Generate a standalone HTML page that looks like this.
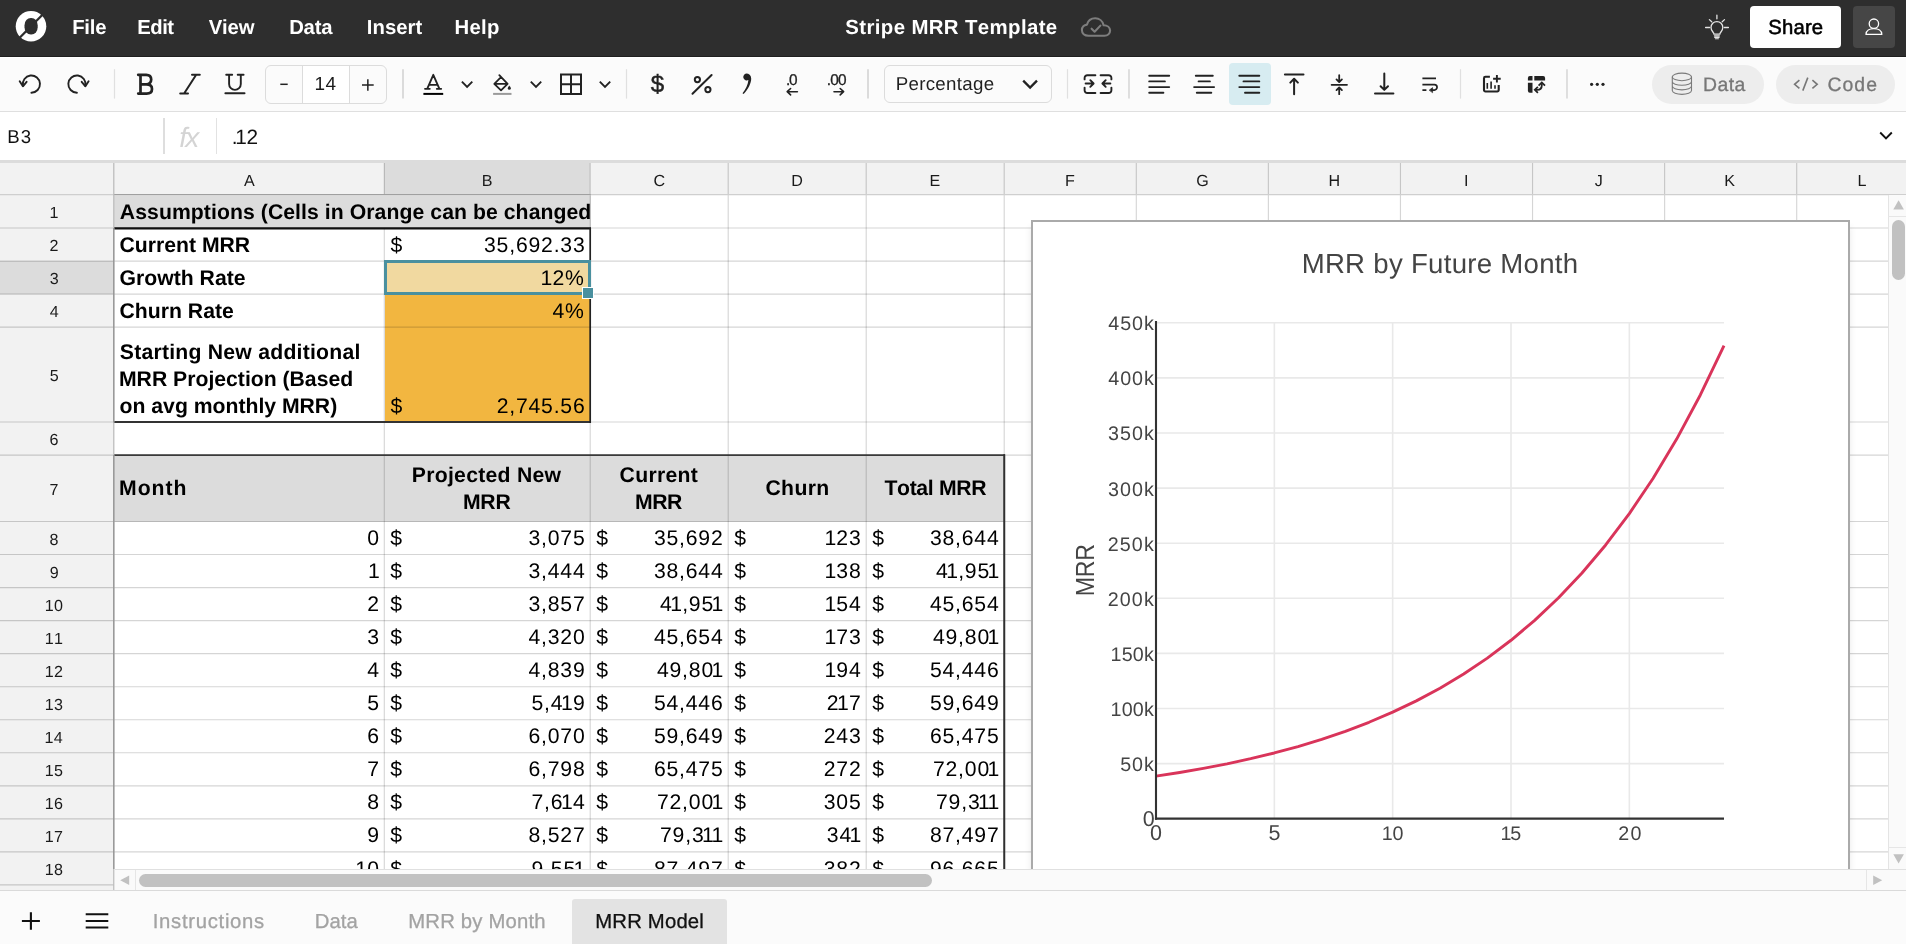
<!DOCTYPE html>
<html lang="en"><head><meta charset="utf-8"><title>Stripe MRR Template</title>
<style>
html,body{margin:0;padding:0;}
body{width:1906px;height:944px;overflow:hidden;position:relative;background:#fff;font-family:"Liberation Sans",sans-serif;font-kerning:none;text-rendering:geometricPrecision;-webkit-font-smoothing:antialiased;}
.t{position:absolute;white-space:pre;line-height:1;display:block;}
.b{position:absolute;box-sizing:border-box;}
svg{position:absolute;overflow:visible;}
.n1{margin:0 -0.7px 0 -2.4px;}
</style></head><body>
<div id="app" style="position:absolute;left:0;top:0;width:1906px;height:944px;will-change:transform;">
<div id="topbar">
<div class="b" style="left:0px;top:0px;width:1906px;height:56px;background:#2e2e2e;"></div>
<div class="b" style="left:0px;top:56px;width:1906px;height:1px;background:#1f1f1f;"></div>
<svg style="left:15px;top:10px" width="33" height="33" viewBox="0 0 33 33"><circle cx="16.0" cy="16.2" r="15.3" fill="#fff"/><rect x="9.5" y="8.0" width="13.2" height="16.5" rx="6.3" ry="7.2" fill="#2e2e2e"/><path d="M4.4 28.0 L29.2 3.0" stroke="#2e2e2e" stroke-width="2.3" fill="none"/></svg>
<span class="t" style="left:72.14px;top:18px;font-size:20.3px;letter-spacing:-0.173px;font-weight:700;color:#fff;">File</span>
<span class="t" style="left:137.34px;top:18px;font-size:20.3px;letter-spacing:-0.511px;font-weight:700;color:#fff;">Edit</span>
<span class="t" style="left:208.76px;top:18px;font-size:20.3px;letter-spacing:-0.187px;font-weight:700;color:#fff;">View</span>
<span class="t" style="left:289.14px;top:18px;font-size:20.3px;letter-spacing:-0.190px;font-weight:700;color:#fff;">Data</span>
<span class="t" style="left:366.84px;top:18px;font-size:20.3px;letter-spacing:0.025px;font-weight:700;color:#fff;">Insert</span>
<span class="t" style="left:454.44px;top:18px;font-size:20.3px;letter-spacing:0.334px;font-weight:700;color:#fff;">Help</span>
<span class="t" style="left:845.31px;top:18px;font-size:20.4px;letter-spacing:0.379px;font-weight:700;color:#fff;">Stripe MRR Template</span>
<svg style="left:1079px;top:14px" width="34" height="26" viewBox="0 0 34 26" fill="none" stroke="#7d7d7d" stroke-width="2.1" stroke-linecap="round" stroke-linejoin="round"><path d="M9.5 21.8 C5.5 21.8 2.9 19.3 2.9 16.1 C2.9 13.1 5.1 10.9 8.0 10.6 C9.0 6.8 12.3 4.3 16.2 4.3 C20.3 4.3 23.8 7.2 24.6 11.2 C28.3 11.2 31.1 13.5 31.1 16.6 C31.1 19.6 28.7 21.8 25.5 21.8 Z"/><path d="M12.6 14.7 L15.6 17.7 L21.4 11.6"/></svg>
<svg style="left:1700px;top:10px" width="34" height="34" viewBox="0 0 34 34" fill="none" stroke="#e4e4e4" stroke-width="1.3" stroke-linecap="round"><path d="M16.9 5.2V8.8M5.6 17.5H9.6M24.3 17.5H28.4M9.4 9.6L11.7 11.8M24.5 9.6L22.2 11.8"/><path d="M14.0 24.2 C14.0 22.4 11.0 21.0 11.0 17.4 C11.0 14.1 13.6 11.6 16.9 11.6 C20.2 11.6 22.8 14.1 22.8 17.4 C22.8 21.0 19.8 22.4 19.8 24.2 Z"/><path d="M14.4 25.9H19.4M14.7 27.4H19.1M15.4 28.8H18.4" stroke-width="1.1"/></svg>
<div class="b" style="left:1750px;top:6px;width:91px;height:42px;background:#fff;border-radius:4px;"></div>
<span class="t" style="left:1768.18px;top:18px;font-size:20.3px;letter-spacing:0.214px;-webkit-text-stroke:0.55px #000;">Share</span>
<div class="b" style="left:1853px;top:6px;width:42px;height:42px;background:#464646;border-radius:4px;"></div>
<svg style="left:1853px;top:6px" width="42" height="42" viewBox="0 0 42 42" fill="none" stroke="#fff" stroke-width="1.3"><circle cx="20.9" cy="17.7" r="4.7"/><path d="M13.0 28.4 C13.0 24.6 16.6 22.6 20.9 22.6 C25.2 22.6 28.8 24.6 28.8 28.4 Z" stroke-linejoin="round"/></svg>
</div>
<div id="toolbar">
<div class="b" style="left:0px;top:58px;width:1906px;height:53px;background:#fbfbfb;"></div>
<div class="b" style="left:0px;top:111px;width:1906px;height:1px;background:#dfdfdf;"></div>
<div class="b" style="left:1229px;top:63px;width:42px;height:41.5px;background:#d7ecf1;border-radius:4px;"></div>
<div class="b" style="left:265px;top:65px;width:122px;height:38.5px;border:1px solid #dcdcdc;border-radius:6px;background:#fbfbfb;"></div>
<div class="b" style="left:302px;top:66px;width:48px;height:36.5px;background:#fff;border-left:1px solid #dcdcdc;border-right:1px solid #dcdcdc;"></div>
<span class="t" style="left:314.45px;top:75px;font-size:19.0px;letter-spacing:0.570px;color:#1a1a1a;">14</span>
<div class="b" style="left:884px;top:65px;width:168px;height:37.5px;border:1px solid #dcdcdc;border-radius:6px;background:#fbfbfb;"></div>
<span class="t" style="left:895.67px;top:75px;font-size:18.7px;letter-spacing:0.313px;color:#1f1f1f;">Percentage</span>
<div class="b" style="left:1652px;top:64.5px;width:112px;height:39.5px;background:#ededed;border-radius:20px;"></div>
<div class="b" style="left:1776px;top:64.5px;width:119px;height:39.5px;background:#ededed;border-radius:20px;"></div>
<span class="t" style="left:1703.11px;top:76px;font-size:19.4px;letter-spacing:0.371px;color:#777;-webkit-text-stroke:0.3px #777;">Data</span>
<span class="t" style="left:1827.51px;top:76px;font-size:19.4px;letter-spacing:1.023px;color:#777;-webkit-text-stroke:0.3px #777;">Code</span>
<span class="t" style="left:785.89px;top:73px;font-size:15.4px;letter-spacing:-1.136px;color:#222;-webkit-text-stroke:0.3px #222;">.0</span>
<span class="t" style="left:826.79px;top:73px;font-size:15.4px;letter-spacing:-0.800px;color:#222;-webkit-text-stroke:0.3px #222;">.00</span>
<svg style="left:0;top:56px" width="1906" height="56" viewBox="0 56 1906 56" fill="none" stroke="#222" stroke-linecap="round" stroke-linejoin="round"><path d="M114.5 69.2V98.6" stroke="#e0e0e0" stroke-width="1.2" stroke-linecap="butt"/><path d="M403 69.2V98.6" stroke="#d4d4d4" stroke-width="1.6" stroke-linecap="butt"/><path d="M626.5 69.2V98.6" stroke="#e0e0e0" stroke-width="1.2" stroke-linecap="butt"/><path d="M868 69.2V98.6" stroke="#d4d4d4" stroke-width="1.6" stroke-linecap="butt"/><path d="M1067.5 69.2V98.6" stroke="#e0e0e0" stroke-width="1.2" stroke-linecap="butt"/><path d="M1129 69.2V98.6" stroke="#d8d8d8" stroke-width="1.6" stroke-linecap="butt"/><path d="M1460.5 69.2V98.6" stroke="#e0e0e0" stroke-width="1.2" stroke-linecap="butt"/><path d="M1567 69.2V98.6" stroke="#d8d8d8" stroke-width="1.6" stroke-linecap="butt"/><g stroke-width="1.9"><path d="M22.9 85.6A8.6 8.6 0 1 1 31.4 92.7"/><path d="M19.7 81.3L22.9 86.3L26.6 81.8"/><path d="M85.4 85.6A8.6 8.6 0 1 0 76.9 92.7"/><path d="M88.6 81.3L85.4 86.3L81.7 81.8"/></g><path d="M138.2 74.8H146.2C150 74.8 151.2 77.3 151.2 79.6C151.2 82 149.6 84.4 146.2 84.4H140.5M146.4 84.4C150.6 84.4 152 86.8 152 89C152 91.3 150.6 93.6 146.6 93.6H138.2M140.5 74.8V93.6" stroke-width="2.7"/><path d="M192 74.8H199.8M180.2 93.5H188M196.2 74.8L184.1 93.5" stroke-width="2.0"/><path d="M229.1 74.8V84.0A5.85 5.85 0 0 0 240.8 84.0V74.8M226.2 74.8H232.2M237.7 74.8H243.6" stroke-width="1.9"/><path d="M225.4 93.3H244.5" stroke-width="2.0"/><path d="M280.3 84.3H287.7" stroke-width="1.5" stroke-linecap="butt"/><path d="M362 85H373.7M367.85 79.2V90.8" stroke-width="1.5" stroke-linecap="butt"/><path d="M427.3 88.7L433.3 74.8L439.3 88.7M429.2 84.9H437.4M425 88.8H429.8M436.8 88.8H441.2" stroke-width="1.85"/><path d="M423.4 93.9H443.2" stroke="#000" stroke-width="2" stroke-linecap="butt"/><path d="M461.90000000000003 81.6L467.1 86.8L472.3 81.6" stroke-width="1.9" stroke-linecap="butt" stroke-linejoin="miter"/><path d="M530.8 81.6L536.0 86.8L541.2 81.6" stroke-width="1.9" stroke-linecap="butt" stroke-linejoin="miter"/><path d="M599.8 81.6L605.0 86.8L610.2 81.6" stroke-width="1.9" stroke-linecap="butt" stroke-linejoin="miter"/><path d="M499.3 75.2L507.6 83.8L501 90.4L494.3 83.8L501 77.1M494.6 83.9H507.2" stroke-width="1.8"/><path d="M509.3 85.6C510.3 86.9 510.8 87.7 510.8 88.3A1.5 1.5 0 0 1 507.8 88.3C507.8 87.7 508.3 86.9 509.3 85.6Z" fill="#222" stroke="none"/><path d="M493.1 93.9H511.5" stroke="#9a9a9a" stroke-width="2" stroke-linecap="butt"/><path d="M561 74.4H581V93.9H561ZM571 74.4V93.9M561 84.15H581" stroke-width="2" stroke-linejoin="miter" stroke-linecap="butt"/><g stroke-width="2.0"><circle cx="697.4" cy="79.6" r="2.6"/><circle cx="707.9" cy="89.6" r="2.6"/><path d="M711.6 75L692.5 93.8"/></g><path d="M746.3 73.6A3.4 3.4 0 1 0 748.4 79.9C748.0 84.6 745.6 89.6 742.5 93.2L743.6 94.1C748.2 89.4 751.4 83.0 751.2 78.6C751.1 75.3 748.9 73.6 746.3 73.6Z" fill="#222" stroke="none"/><g stroke-width="1.6"><path d="M797.4 91.7H787.4M790.6 88.5L787.2 91.7L790.6 94.9"/><path d="M834 91.7H843.4M840.2 88.5L843.6 91.7L840.2 94.9"/></g><path d="M1023.2 80.6L1030.1 87.6L1037 80.6" stroke-width="2.3" stroke-linecap="butt" stroke-linejoin="miter"/><g stroke-width="1.9"><path d="M1095.4 75.2H1087.3A2.7 2.7 0 0 0 1084.6 77.9V79.4M1084.6 87.6V90.3A2.7 2.7 0 0 0 1087.3 93H1095.4M1100.6 75.2H1108.7A2.7 2.7 0 0 1 1111.4 77.9V79.4M1111.4 87.6V90.3A2.7 2.7 0 0 1 1108.7 93H1100.6"/><path d="M1085.6 83.5H1093.4M1090.3 80.2L1093.6 83.5L1090.3 86.8M1110.4 83.5H1102.6M1105.7 80.2L1102.4 83.5L1105.7 86.8"/></g><g stroke-width="1.9"><path d="M1149.2 75.8H1169.2M1149.2 81.4H1164.9M1149.2 87.1H1169.2M1149.2 92.7H1163.4"/><path d="M1195.8 75.8H1212.8M1198.6 81.4H1209.9M1194.1 87.1H1214.1M1196.8 92.7H1211.3"/><path d="M1239.3 75.8H1259.3M1243.5 81.4H1259.3M1239.3 87.1H1259.3M1245 92.7H1259.3"/></g><g stroke-width="2.0"><path d="M1284.9 74.4H1303.5M1294.1 79V94.2M1290.3 82.6L1294.1 78.8L1297.9 82.6"/><path d="M1331.6 84.8H1347M1339.2 75.2V81.6M1336.5 79.4L1339.2 82.1L1341.9 79.4M1339.2 94.2V87.9M1336.5 90.1L1339.2 87.4L1341.9 90.1" stroke-width="1.8"/><path d="M1375 93.4H1393.4M1384.3 73.6V89.6M1380.6 86.2L1384.3 89.9L1388 86.2"/></g><g stroke-width="1.75"><path d="M1422.4 78.3H1436M1422.4 84.7H1434.4A2.65 2.65 0 0 1 1434.4 90H1431.6M1422.4 90H1426.4" stroke-linecap="butt"/><path d="M1429.4 90L1432.6 87.6V92.4Z" fill="#222" stroke-width="0.6"/></g><g stroke-width="2.1"><path d="M1489.9 76.8H1485.4A1.4 1.4 0 0 0 1484 78.2V90.1A1.4 1.4 0 0 0 1485.4 91.5H1497.3A1.4 1.4 0 0 0 1498.7 90.1V85.1" stroke-linecap="butt"/><path d="M1493.1 78.7H1500.7M1496.9 75.1V82.5" stroke-width="1.9" stroke-linecap="butt"/><path d="M1487.3 83.1V88.7M1491.1 81.4V88.7M1495 85.2V88.7" stroke-width="1.6" stroke-linecap="butt"/></g><g fill="#222" stroke="none"><path d="M1529.9 76H1532.5V80.4H1527.9V78A2 2 0 0 1 1529.9 76Z"/><path d="M1534.3 76H1543.1A2 2 0 0 1 1545.1 78V80.4H1534.3Z"/><path d="M1527.9 82.8H1532.5V92.7H1529.9A2 2 0 0 1 1527.9 90.7Z"/></g><g stroke-width="1.8" stroke-linecap="butt" stroke-linejoin="miter"><path d="M1535.2 89.8H1537.2C1540.2 89.8 1541.8 88 1541.8 85.2V83.4"/><path d="M1537.9 86.9L1534.8 89.8L1537.9 92.8M1538.6 85.6L1541.8 82.4L1545 85.6"/></g><circle cx="1591.6" cy="84.3" r="1.6" fill="#222" stroke="none"/><circle cx="1597.3" cy="84.3" r="1.6" fill="#222" stroke="none"/><circle cx="1603.0" cy="84.3" r="1.6" fill="#222" stroke="none"/><g stroke="#7a7a7a" stroke-width="1.1"><ellipse cx="1681.9" cy="76.9" rx="9.6" ry="3.8"/><path d="M1672.3 76.9V90.6C1672.3 92.7 1676.6 94.4 1681.9 94.4C1687.2 94.4 1691.5 92.7 1691.5 90.6V76.9M1672.3 81.5C1672.3 83.6 1676.6 85.3 1681.9 85.3C1687.2 85.3 1691.5 83.6 1691.5 81.5M1672.3 86.1C1672.3 88.2 1676.6 89.9 1681.9 89.9C1687.2 89.9 1691.5 88.2 1691.5 86.1"/></g><g stroke="#777" stroke-width="1.6" stroke-linecap="butt" stroke-linejoin="miter"><path d="M1799.4 80.2L1794.6 84.3L1799.4 88.4M1812.4 80.2L1817.2 84.3L1812.4 88.4M1807.8 77.6L1802.8 90.6"/></g></svg>
<span class="t" style="left:650.74px;top:73px;font-size:24.2px;color:#222;-webkit-text-stroke:0.45px #222;">$</span>
</div>
<div id="formulabar">
<div class="b" style="left:0px;top:112px;width:1906px;height:48px;background:#fff;"></div>
<span class="t" style="left:7.17px;top:128px;font-size:18.6px;letter-spacing:1.093px;color:#111;">B3</span>
<div class="b" style="left:163px;top:118px;width:2px;height:36px;background:#dedede;"></div>
<div class="b" style="left:216px;top:118px;width:1px;height:36px;background:#e2e2e2;"></div>
<span class="t" style="left:179.36px;top:124px;font-size:28.0px;letter-spacing:-1.956px;font-style:italic;color:#d4d4d4;">fx</span>
<span class="t" style="left:231.70px;top:128px;font-size:20.8px;letter-spacing:0.200px;color:#111;">.<span class="n1">1</span>2</span>
<svg style="left:1874px;top:128px" width="24" height="16" viewBox="1874 128 24 16" fill="none" stroke="#111" stroke-width="1.9"><path d="M1880.2 132.5L1886 138.3L1891.8 132.5"/></svg>
</div>
<div id="grid" style="position:absolute;left:0;top:160px;width:1906px;height:709px;overflow:hidden;">
<div style="position:absolute;left:0;top:-160px;width:1906px;height:944px;">
<div class="b" style="left:0px;top:160px;width:1906px;height:709px;background:#fff;"></div>
<div class="b" style="left:114px;top:195px;width:476.5px;height:33.2px;background:#dcdcdc;"></div>
<div class="b" style="left:114px;top:455px;width:890.3px;height:67px;background:#dcdcdc;"></div>
<div class="b" style="left:384.5px;top:294px;width:206px;height:128px;background:#f2b640;"></div>
<div class="b" style="left:384.5px;top:261px;width:206px;height:33.5px;background:#f1d9a0;"></div>
<svg style="left:0;top:0" width="1906" height="944" viewBox="0 0 1906 944" fill="none"><g stroke="#000" stroke-opacity="0.165" stroke-width="1.15"><path d="M114 228.00H1888"/><path d="M114 261.05H1888"/><path d="M114 294.10H1888"/><path d="M114 327.15H1888"/><path d="M114 422.00H1888"/><path d="M114 455.10H1888"/><path d="M114 521.50H1888"/><path d="M114 554.54H1888"/><path d="M114 587.58H1888"/><path d="M114 620.62H1888"/><path d="M114 653.66H1888"/><path d="M114 686.70H1888"/><path d="M114 719.74H1888"/><path d="M114 752.78H1888"/><path d="M114 785.82H1888"/><path d="M114 818.86H1888"/><path d="M114 851.90H1888"/><path d="M384.30 228.5V869"/><path d="M590.20 195V869"/><path d="M728.20 195V869"/><path d="M866.20 195V869"/><path d="M1004.20 195V869"/><path d="M1136.30 195V869"/><path d="M1268.38 195V869"/><path d="M1400.46 195V869"/><path d="M1532.54 195V869"/><path d="M1664.62 195V869"/><path d="M1796.70 195V869"/></g><g stroke="#222" stroke-linecap="butt"><path d="M114 228.4H591" stroke-width="2.1" stroke="#111"/><path d="M114 422.0H591" stroke-width="2.0" stroke="#333"/><path d="M590.2 228V423" stroke-width="1.7" stroke="#222"/><path d="M114 455.2H1005" stroke-width="1.8" stroke="#3a3a3a"/><path d="M1004.25 454.3V869" stroke-width="2.0" stroke="#303030"/></g></svg>
<div class="b" style="left:383.6px;top:260.2px;width:207.2px;height:35.2px;border:3px solid #4a909f;"></div>
<div class="b" style="left:582px;top:286.8px;width:12.4px;height:12.4px;background:#4a909f;border:1.2px solid #fff;"></div>
<div style="position:absolute;left:114px;top:195px;width:476.5px;height:33px;overflow:hidden;"><div style="position:absolute;left:-114px;top:-195px;"><span class="t" style="left:119.87px;top:202px;font-size:21.2px;letter-spacing:0.068px;font-weight:700;">Assumptions (Cells in Orange can be changed)</span></div></div>
<span class="t" style="left:119.53px;top:235px;font-size:21.2px;letter-spacing:-0.003px;font-weight:700;">Current MRR</span>
<span class="t" style="left:119.53px;top:268px;font-size:21.2px;letter-spacing:0.006px;font-weight:700;">Growth Rate</span>
<span class="t" style="left:119.53px;top:301px;font-size:21.2px;letter-spacing:0.016px;font-weight:700;">Churn Rate</span>
<span class="t" style="left:119.79px;top:342px;font-size:21.2px;letter-spacing:0.234px;font-weight:700;">Starting New additional</span>
<span class="t" style="left:118.98px;top:369px;font-size:21.2px;letter-spacing:-0.005px;font-weight:700;">MRR Projection (Based</span>
<span class="t" style="left:119.57px;top:396px;font-size:21.2px;letter-spacing:-0.005px;font-weight:700;">on avg monthly MRR)</span>
<span class="t" style="left:390.47px;top:235px;font-size:21.2px;">$</span>
<span class="t" style="right:1320.50px;top:235px;font-size:21.2px;letter-spacing:0.8px;">35,692.33</span>
<span class="t" style="right:1321.40px;top:268px;font-size:21.2px;letter-spacing:0.8px;"><span class="n1">1</span>2%</span>
<span class="t" style="right:1321.40px;top:301px;font-size:21.2px;letter-spacing:0.8px;">4%</span>
<span class="t" style="left:390.47px;top:396px;font-size:21.2px;">$</span>
<span class="t" style="right:1320.50px;top:396px;font-size:21.2px;letter-spacing:0.8px;">2,745.56</span>
<span class="t" style="left:119.08px;top:478px;font-size:21.2px;letter-spacing:0.941px;font-weight:700;">Month</span>
<span class="t" style="left:411.78px;top:465px;font-size:21.2px;letter-spacing:0.274px;font-weight:700;">Projected New</span>
<span class="t" style="left:462.98px;top:492px;font-size:21.2px;letter-spacing:-0.263px;font-weight:700;">MRR</span>
<span class="t" style="left:619.53px;top:465px;font-size:21.2px;letter-spacing:0.311px;font-weight:700;">Current</span>
<span class="t" style="left:634.88px;top:492px;font-size:21.2px;letter-spacing:-0.363px;font-weight:700;">MRR</span>
<span class="t" style="left:765.43px;top:478px;font-size:21.2px;letter-spacing:0.369px;font-weight:700;">Churn</span>
<span class="t" style="left:884.46px;top:478px;font-size:21.2px;letter-spacing:-0.342px;font-weight:700;">Total MRR</span>
<span class="t" style="right:1526.20px;top:528px;font-size:21.2px;letter-spacing:0.8px;">0</span>
<span class="t" style="left:390.27px;top:528px;font-size:21.2px;">$</span>
<span class="t" style="right:1320.50px;top:528px;font-size:21.2px;letter-spacing:0.8px;">3,075</span>
<span class="t" style="left:596.27px;top:528px;font-size:21.2px;">$</span>
<span class="t" style="right:1182.50px;top:528px;font-size:21.2px;letter-spacing:0.8px;">35,692</span>
<span class="t" style="left:734.27px;top:528px;font-size:21.2px;">$</span>
<span class="t" style="right:1044.50px;top:528px;font-size:21.2px;letter-spacing:0.8px;"><span class="n1">1</span>23</span>
<span class="t" style="left:872.27px;top:528px;font-size:21.2px;">$</span>
<span class="t" style="right:906.50px;top:528px;font-size:21.2px;letter-spacing:0.8px;">38,644</span>
<span class="t" style="right:1526.20px;top:561px;font-size:21.2px;letter-spacing:0.8px;"><span class="n1">1</span></span>
<span class="t" style="left:390.27px;top:561px;font-size:21.2px;">$</span>
<span class="t" style="right:1320.50px;top:561px;font-size:21.2px;letter-spacing:0.8px;">3,444</span>
<span class="t" style="left:596.27px;top:561px;font-size:21.2px;">$</span>
<span class="t" style="right:1182.50px;top:561px;font-size:21.2px;letter-spacing:0.8px;">38,644</span>
<span class="t" style="left:734.27px;top:561px;font-size:21.2px;">$</span>
<span class="t" style="right:1044.50px;top:561px;font-size:21.2px;letter-spacing:0.8px;"><span class="n1">1</span>38</span>
<span class="t" style="left:872.27px;top:561px;font-size:21.2px;">$</span>
<span class="t" style="right:906.50px;top:561px;font-size:21.2px;letter-spacing:0.8px;">4<span class="n1">1</span>,95<span class="n1">1</span></span>
<span class="t" style="right:1526.20px;top:594px;font-size:21.2px;letter-spacing:0.8px;">2</span>
<span class="t" style="left:390.27px;top:594px;font-size:21.2px;">$</span>
<span class="t" style="right:1320.50px;top:594px;font-size:21.2px;letter-spacing:0.8px;">3,857</span>
<span class="t" style="left:596.27px;top:594px;font-size:21.2px;">$</span>
<span class="t" style="right:1182.50px;top:594px;font-size:21.2px;letter-spacing:0.8px;">4<span class="n1">1</span>,95<span class="n1">1</span></span>
<span class="t" style="left:734.27px;top:594px;font-size:21.2px;">$</span>
<span class="t" style="right:1044.50px;top:594px;font-size:21.2px;letter-spacing:0.8px;"><span class="n1">1</span>54</span>
<span class="t" style="left:872.27px;top:594px;font-size:21.2px;">$</span>
<span class="t" style="right:906.50px;top:594px;font-size:21.2px;letter-spacing:0.8px;">45,654</span>
<span class="t" style="right:1526.20px;top:627px;font-size:21.2px;letter-spacing:0.8px;">3</span>
<span class="t" style="left:390.27px;top:627px;font-size:21.2px;">$</span>
<span class="t" style="right:1320.50px;top:627px;font-size:21.2px;letter-spacing:0.8px;">4,320</span>
<span class="t" style="left:596.27px;top:627px;font-size:21.2px;">$</span>
<span class="t" style="right:1182.50px;top:627px;font-size:21.2px;letter-spacing:0.8px;">45,654</span>
<span class="t" style="left:734.27px;top:627px;font-size:21.2px;">$</span>
<span class="t" style="right:1044.50px;top:627px;font-size:21.2px;letter-spacing:0.8px;"><span class="n1">1</span>73</span>
<span class="t" style="left:872.27px;top:627px;font-size:21.2px;">$</span>
<span class="t" style="right:906.50px;top:627px;font-size:21.2px;letter-spacing:0.8px;">49,80<span class="n1">1</span></span>
<span class="t" style="right:1526.20px;top:660px;font-size:21.2px;letter-spacing:0.8px;">4</span>
<span class="t" style="left:390.27px;top:660px;font-size:21.2px;">$</span>
<span class="t" style="right:1320.50px;top:660px;font-size:21.2px;letter-spacing:0.8px;">4,839</span>
<span class="t" style="left:596.27px;top:660px;font-size:21.2px;">$</span>
<span class="t" style="right:1182.50px;top:660px;font-size:21.2px;letter-spacing:0.8px;">49,80<span class="n1">1</span></span>
<span class="t" style="left:734.27px;top:660px;font-size:21.2px;">$</span>
<span class="t" style="right:1044.50px;top:660px;font-size:21.2px;letter-spacing:0.8px;"><span class="n1">1</span>94</span>
<span class="t" style="left:872.27px;top:660px;font-size:21.2px;">$</span>
<span class="t" style="right:906.50px;top:660px;font-size:21.2px;letter-spacing:0.8px;">54,446</span>
<span class="t" style="right:1526.20px;top:693px;font-size:21.2px;letter-spacing:0.8px;">5</span>
<span class="t" style="left:390.27px;top:693px;font-size:21.2px;">$</span>
<span class="t" style="right:1320.50px;top:693px;font-size:21.2px;letter-spacing:0.8px;">5,4<span class="n1">1</span>9</span>
<span class="t" style="left:596.27px;top:693px;font-size:21.2px;">$</span>
<span class="t" style="right:1182.50px;top:693px;font-size:21.2px;letter-spacing:0.8px;">54,446</span>
<span class="t" style="left:734.27px;top:693px;font-size:21.2px;">$</span>
<span class="t" style="right:1044.50px;top:693px;font-size:21.2px;letter-spacing:0.8px;">2<span class="n1">1</span>7</span>
<span class="t" style="left:872.27px;top:693px;font-size:21.2px;">$</span>
<span class="t" style="right:906.50px;top:693px;font-size:21.2px;letter-spacing:0.8px;">59,649</span>
<span class="t" style="right:1526.20px;top:726px;font-size:21.2px;letter-spacing:0.8px;">6</span>
<span class="t" style="left:390.27px;top:726px;font-size:21.2px;">$</span>
<span class="t" style="right:1320.50px;top:726px;font-size:21.2px;letter-spacing:0.8px;">6,070</span>
<span class="t" style="left:596.27px;top:726px;font-size:21.2px;">$</span>
<span class="t" style="right:1182.50px;top:726px;font-size:21.2px;letter-spacing:0.8px;">59,649</span>
<span class="t" style="left:734.27px;top:726px;font-size:21.2px;">$</span>
<span class="t" style="right:1044.50px;top:726px;font-size:21.2px;letter-spacing:0.8px;">243</span>
<span class="t" style="left:872.27px;top:726px;font-size:21.2px;">$</span>
<span class="t" style="right:906.50px;top:726px;font-size:21.2px;letter-spacing:0.8px;">65,475</span>
<span class="t" style="right:1526.20px;top:759px;font-size:21.2px;letter-spacing:0.8px;">7</span>
<span class="t" style="left:390.27px;top:759px;font-size:21.2px;">$</span>
<span class="t" style="right:1320.50px;top:759px;font-size:21.2px;letter-spacing:0.8px;">6,798</span>
<span class="t" style="left:596.27px;top:759px;font-size:21.2px;">$</span>
<span class="t" style="right:1182.50px;top:759px;font-size:21.2px;letter-spacing:0.8px;">65,475</span>
<span class="t" style="left:734.27px;top:759px;font-size:21.2px;">$</span>
<span class="t" style="right:1044.50px;top:759px;font-size:21.2px;letter-spacing:0.8px;">272</span>
<span class="t" style="left:872.27px;top:759px;font-size:21.2px;">$</span>
<span class="t" style="right:906.50px;top:759px;font-size:21.2px;letter-spacing:0.8px;">72,00<span class="n1">1</span></span>
<span class="t" style="right:1526.20px;top:792px;font-size:21.2px;letter-spacing:0.8px;">8</span>
<span class="t" style="left:390.27px;top:792px;font-size:21.2px;">$</span>
<span class="t" style="right:1320.50px;top:792px;font-size:21.2px;letter-spacing:0.8px;">7,6<span class="n1">1</span>4</span>
<span class="t" style="left:596.27px;top:792px;font-size:21.2px;">$</span>
<span class="t" style="right:1182.50px;top:792px;font-size:21.2px;letter-spacing:0.8px;">72,00<span class="n1">1</span></span>
<span class="t" style="left:734.27px;top:792px;font-size:21.2px;">$</span>
<span class="t" style="right:1044.50px;top:792px;font-size:21.2px;letter-spacing:0.8px;">305</span>
<span class="t" style="left:872.27px;top:792px;font-size:21.2px;">$</span>
<span class="t" style="right:906.50px;top:792px;font-size:21.2px;letter-spacing:0.8px;">79,3<span class="n1">1</span><span class="n1">1</span></span>
<span class="t" style="right:1526.20px;top:825px;font-size:21.2px;letter-spacing:0.8px;">9</span>
<span class="t" style="left:390.27px;top:825px;font-size:21.2px;">$</span>
<span class="t" style="right:1320.50px;top:825px;font-size:21.2px;letter-spacing:0.8px;">8,527</span>
<span class="t" style="left:596.27px;top:825px;font-size:21.2px;">$</span>
<span class="t" style="right:1182.50px;top:825px;font-size:21.2px;letter-spacing:0.8px;">79,3<span class="n1">1</span><span class="n1">1</span></span>
<span class="t" style="left:734.27px;top:825px;font-size:21.2px;">$</span>
<span class="t" style="right:1044.50px;top:825px;font-size:21.2px;letter-spacing:0.8px;">34<span class="n1">1</span></span>
<span class="t" style="left:872.27px;top:825px;font-size:21.2px;">$</span>
<span class="t" style="right:906.50px;top:825px;font-size:21.2px;letter-spacing:0.8px;">87,497</span>
<span class="t" style="right:1526.20px;top:859px;font-size:21.2px;letter-spacing:0.8px;"><span class="n1">1</span>0</span>
<span class="t" style="left:390.27px;top:859px;font-size:21.2px;">$</span>
<span class="t" style="right:1320.50px;top:859px;font-size:21.2px;letter-spacing:0.8px;">9,55<span class="n1">1</span></span>
<span class="t" style="left:596.27px;top:859px;font-size:21.2px;">$</span>
<span class="t" style="right:1182.50px;top:859px;font-size:21.2px;letter-spacing:0.8px;">87,497</span>
<span class="t" style="left:734.27px;top:859px;font-size:21.2px;">$</span>
<span class="t" style="right:1044.50px;top:859px;font-size:21.2px;letter-spacing:0.8px;">382</span>
<span class="t" style="left:872.27px;top:859px;font-size:21.2px;">$</span>
<span class="t" style="right:906.50px;top:859px;font-size:21.2px;letter-spacing:0.8px;">96,665</span>
</div></div>
<div id="chart" style="position:absolute;left:1010px;top:200px;width:878px;height:669px;overflow:hidden;">
<div style="position:absolute;left:-1010px;top:-200px;width:1906px;height:944px;">
<div class="b" style="left:1031px;top:220px;width:819px;height:700px;background:#fff;border:2px solid #aaa;box-shadow:0 7px 7px 0 rgba(0,0,0,0.09);"></div>
<svg style="left:0;top:0" width="1906" height="944" viewBox="0 0 1906 944" fill="none"><g stroke="#e9e9e9" stroke-width="1.6"><path d="M1156.0 763.60H1724.0"/><path d="M1156.0 708.50H1724.0"/><path d="M1156.0 653.40H1724.0"/><path d="M1156.0 598.30H1724.0"/><path d="M1156.0 543.20H1724.0"/><path d="M1156.0 488.10H1724.0"/><path d="M1156.0 433.00H1724.0"/><path d="M1156.0 377.90H1724.0"/><path d="M1156.0 322.80H1724.0"/><path d="M1274.33 322V818.7"/><path d="M1392.67 322V818.7"/><path d="M1511.00 322V818.7"/><path d="M1629.33 322V818.7"/></g><path d="M1156.00 776.11L1179.67 772.47L1203.33 768.39L1227.00 763.82L1250.67 758.70L1274.33 752.97L1298.00 746.55L1321.67 739.35L1345.33 731.30L1369.00 722.28L1392.67 712.17L1416.33 700.86L1440.00 688.18L1463.67 673.99L1487.33 658.09L1511.00 640.28L1534.67 620.34L1558.33 598.01L1582.00 572.99L1605.67 544.97L1629.33 513.59L1653.00 478.44L1676.67 439.08L1700.33 394.99L1724.00 345.61" stroke="#d9345a" stroke-width="2.9" stroke-linejoin="round"/><path d="M1156.0 321V819.8000000000001" stroke="#333" stroke-width="2.1"/><path d="M1154.95 818.7H1724.0" stroke="#333" stroke-width="2.2"/></svg>
<span class="t" style="left:1301.64px;top:250px;font-size:27.6px;letter-spacing:0.282px;color:#444;">MRR by Future Month</span>
<span class="t" style="left:1142.68px;top:809px;font-size:21.5px;color:#444;">0</span>
<span class="t" style="left:1120.21px;top:756px;font-size:19.7px;letter-spacing:0.899px;color:#444;">50k</span>
<span class="t" style="left:1110.50px;top:701px;font-size:19.7px;letter-spacing:0.184px;color:#444;">100k</span>
<span class="t" style="left:1110.50px;top:646px;font-size:19.7px;letter-spacing:0.184px;color:#444;">150k</span>
<span class="t" style="left:1107.71px;top:591px;font-size:19.7px;letter-spacing:1.114px;color:#444;">200k</span>
<span class="t" style="left:1107.71px;top:536px;font-size:19.7px;letter-spacing:1.114px;color:#444;">250k</span>
<span class="t" style="left:1107.95px;top:481px;font-size:19.7px;letter-spacing:1.034px;color:#444;">300k</span>
<span class="t" style="left:1107.95px;top:425px;font-size:19.7px;letter-spacing:1.034px;color:#444;">350k</span>
<span class="t" style="left:1108.25px;top:370px;font-size:19.7px;letter-spacing:0.935px;color:#444;">400k</span>
<span class="t" style="left:1108.25px;top:315px;font-size:19.7px;letter-spacing:0.935px;color:#444;">450k</span>
<span class="t" style="left:1150.02px;top:823px;font-size:21.5px;color:#444;">0</span>
<span class="t" style="left:1268.38px;top:823px;font-size:21.5px;color:#444;">5</span>
<span class="t" style="left:1381.80px;top:825px;font-size:19.7px;letter-spacing:-0.342px;color:#444;">10</span>
<span class="t" style="left:1500.40px;top:825px;font-size:19.7px;letter-spacing:-1.085px;color:#444;">15</span>
<span class="t" style="left:1618.31px;top:825px;font-size:19.7px;letter-spacing:1.248px;color:#444;">20</span>
<span class="t" style="left:1093.9px;top:595.1px;font-size:26.2px;color:#444;transform-origin:0 0;transform:rotate(-90deg) scaleX(0.885);letter-spacing:-0.3px;"><span style="position:relative;top:-22.2px;left:-1.5px;">MRR</span></span>
</div></div>
<div id="headers">
<div class="b" style="left:0px;top:160px;width:1906px;height:3px;background:#dcdcdc;"></div>
<div class="b" style="left:0px;top:163px;width:1906px;height:31.5px;background:#f2f2f2;"></div>
<div class="b" style="left:384.3px;top:163px;width:206px;height:31.5px;background:#dcdcdc;"></div>
<div class="b" style="left:0px;top:194.5px;width:113.9px;height:696px;background:#f2f2f2;"></div>
<div class="b" style="left:0px;top:261px;width:113.9px;height:33.1px;background:#dcdcdc;"></div>
<svg style="left:0;top:0" width="1906" height="944" viewBox="0 0 1906 944" fill="none"><g stroke="#000" stroke-opacity="0.18" stroke-width="1.15"><path d="M384.30 163V194.5"/><path d="M590.20 163V194.5"/><path d="M728.20 163V194.5"/><path d="M866.20 163V194.5"/><path d="M1004.20 163V194.5"/><path d="M1136.30 163V194.5"/><path d="M1268.38 163V194.5"/><path d="M1400.46 163V194.5"/><path d="M1532.54 163V194.5"/><path d="M1664.62 163V194.5"/><path d="M1796.70 163V194.5"/><path d="M0 228.00H113.5"/><path d="M0 261.05H113.5"/><path d="M0 294.10H113.5"/><path d="M0 327.15H113.5"/><path d="M0 422.00H113.5"/><path d="M0 455.10H113.5"/><path d="M0 521.50H113.5"/><path d="M0 554.54H113.5"/><path d="M0 587.58H113.5"/><path d="M0 620.62H113.5"/><path d="M0 653.66H113.5"/><path d="M0 686.70H113.5"/><path d="M0 719.74H113.5"/><path d="M0 752.78H113.5"/><path d="M0 785.82H113.5"/><path d="M0 818.86H113.5"/><path d="M0 851.90H113.5"/><path d="M0 884.94H113.5"/></g><path d="M0 194.6H1906" stroke="#cfcfcf" stroke-width="1.3"/><path d="M114 194.5H590.8" stroke="#a0a0a0" stroke-width="1.2"/><path d="M113.8 163V891" stroke="#b8b8b8" stroke-width="1.2"/><path d="M113.8 228V422.5M113.8 455V869" stroke="#8f8f8f" stroke-width="1.2"/></svg>
<span class="t" style="left:243.93px;top:173px;font-size:16.1px;color:#1a1a1a;">A</span>
<span class="t" style="left:481.69px;top:173px;font-size:16.1px;color:#1a1a1a;">B</span>
<span class="t" style="left:653.38px;top:173px;font-size:16.1px;color:#1a1a1a;">C</span>
<span class="t" style="left:791.21px;top:173px;font-size:16.1px;color:#1a1a1a;">D</span>
<span class="t" style="left:929.62px;top:173px;font-size:16.1px;color:#1a1a1a;">E</span>
<span class="t" style="left:1065.04px;top:173px;font-size:16.1px;color:#1a1a1a;">F</span>
<span class="t" style="left:1196.23px;top:173px;font-size:16.1px;color:#1a1a1a;">G</span>
<span class="t" style="left:1328.48px;top:173px;font-size:16.1px;color:#1a1a1a;">H</span>
<span class="t" style="left:1464.06px;top:173px;font-size:16.1px;color:#1a1a1a;">I</span>
<span class="t" style="left:1594.75px;top:173px;font-size:16.1px;color:#1a1a1a;">J</span>
<span class="t" style="left:1724.36px;top:173px;font-size:16.1px;color:#1a1a1a;">K</span>
<span class="t" style="left:1857.43px;top:173px;font-size:16.1px;color:#1a1a1a;">L</span>
<span class="t" style="left:49.40px;top:205px;font-size:16.1px;letter-spacing:0.300px;color:#1a1a1a;">1</span>
<span class="t" style="left:49.62px;top:238px;font-size:16.1px;letter-spacing:0.300px;color:#1a1a1a;">2</span>
<span class="t" style="left:49.67px;top:271px;font-size:16.1px;letter-spacing:0.300px;color:#1a1a1a;">3</span>
<span class="t" style="left:49.67px;top:304px;font-size:16.1px;letter-spacing:0.300px;color:#1a1a1a;">4</span>
<span class="t" style="left:49.64px;top:368px;font-size:16.1px;letter-spacing:0.300px;color:#1a1a1a;">5</span>
<span class="t" style="left:49.57px;top:432px;font-size:16.1px;letter-spacing:0.300px;color:#1a1a1a;">6</span>
<span class="t" style="left:49.62px;top:482px;font-size:16.1px;letter-spacing:0.300px;color:#1a1a1a;">7</span>
<span class="t" style="left:49.62px;top:532px;font-size:16.1px;letter-spacing:0.300px;color:#1a1a1a;">8</span>
<span class="t" style="left:49.63px;top:565px;font-size:16.1px;letter-spacing:0.300px;color:#1a1a1a;">9</span>
<span class="t" style="left:44.70px;top:598px;font-size:16.1px;letter-spacing:0.300px;color:#1a1a1a;">10</span>
<span class="t" style="left:44.78px;top:631px;font-size:16.1px;letter-spacing:0.300px;color:#1a1a1a;">11</span>
<span class="t" style="left:44.79px;top:664px;font-size:16.1px;letter-spacing:0.300px;color:#1a1a1a;">12</span>
<span class="t" style="left:44.74px;top:697px;font-size:16.1px;letter-spacing:0.300px;color:#1a1a1a;">13</span>
<span class="t" style="left:44.62px;top:730px;font-size:16.1px;letter-spacing:0.300px;color:#1a1a1a;">14</span>
<span class="t" style="left:44.72px;top:763px;font-size:16.1px;letter-spacing:0.300px;color:#1a1a1a;">15</span>
<span class="t" style="left:44.74px;top:796px;font-size:16.1px;letter-spacing:0.300px;color:#1a1a1a;">16</span>
<span class="t" style="left:44.79px;top:829px;font-size:16.1px;letter-spacing:0.300px;color:#1a1a1a;">17</span>
<span class="t" style="left:44.73px;top:862px;font-size:16.1px;letter-spacing:0.300px;color:#1a1a1a;">18</span>
</div>
<div id="scroll">
<div class="b" style="left:1888px;top:195px;width:18px;height:696px;background:#fafafa;border-left:1px solid #e4e4e4;"></div>
<div class="b" style="left:114.6px;top:869px;width:1792px;height:22px;background:#fafafa;border-top:1px solid #e0e0e0;"></div>
<div class="b" style="left:1891.8px;top:220px;width:13.2px;height:60px;background:#c1c1c1;border-radius:7px;"></div>
<div class="b" style="left:139px;top:873.6px;width:793px;height:13.3px;background:#c1c1c1;border-radius:7px;"></div>
<div class="b" style="left:135px;top:870px;width:1px;height:21px;background:#e6e6e6;"></div>
<div class="b" style="left:1866px;top:870px;width:1px;height:21px;background:#e6e6e6;"></div>
<div class="b" style="left:1888px;top:216px;width:18px;height:1px;background:#e6e6e6;"></div>
<div class="b" style="left:1888px;top:847px;width:18px;height:1px;background:#e6e6e6;"></div>
<svg style="left:0;top:0" width="1906" height="944" viewBox="0 0 1906 944" fill="#c1c1c1"><path d="M120.2 880.2L129.2 875.4V885Z"/><path d="M1882.2 880.2L1873.2 875.4V885Z"/><path d="M1898.6 200.2L1903.9 209.4H1893.3Z"/><path d="M1898.6 863.4L1903.9 854.2H1893.3Z"/></svg>
</div>
<div id="sheetbar">
<div class="b" style="left:0px;top:890px;width:1906px;height:54px;background:#fbfbfb;border-top:1px solid #dadada;"></div>
<div class="b" style="left:572.3px;top:898.9px;width:154.5px;height:46px;background:#e3e3e3;border-radius:3px 3px 0 0;"></div>
<svg style="left:0;top:890px" width="200" height="54" viewBox="0 890 200 54" fill="none" stroke="#111" stroke-width="2.1"><path d="M21.9 921H39.9M30.9 912.2V929.8"/><path d="M85.7 914.3H108.3M85.7 920.9H108.3M85.7 927.5H108.3" stroke-width="2.0"/></svg>
<span class="t" style="left:152.73px;top:912px;font-size:20.3px;letter-spacing:0.710px;color:#a3a3a3;-webkit-text-stroke:0.3px #a3a3a3;">Instructions</span>
<span class="t" style="left:314.73px;top:912px;font-size:20.3px;letter-spacing:0.095px;color:#a3a3a3;-webkit-text-stroke:0.3px #a3a3a3;">Data</span>
<span class="t" style="left:408.23px;top:912px;font-size:20.3px;letter-spacing:0.183px;color:#a3a3a3;-webkit-text-stroke:0.3px #a3a3a3;">MRR by Month</span>
<span class="t" style="left:595.23px;top:912px;font-size:20.3px;letter-spacing:0.195px;color:#111;-webkit-text-stroke:0.3px #111;">MRR Model</span>
</div>
</div>
</body></html>
